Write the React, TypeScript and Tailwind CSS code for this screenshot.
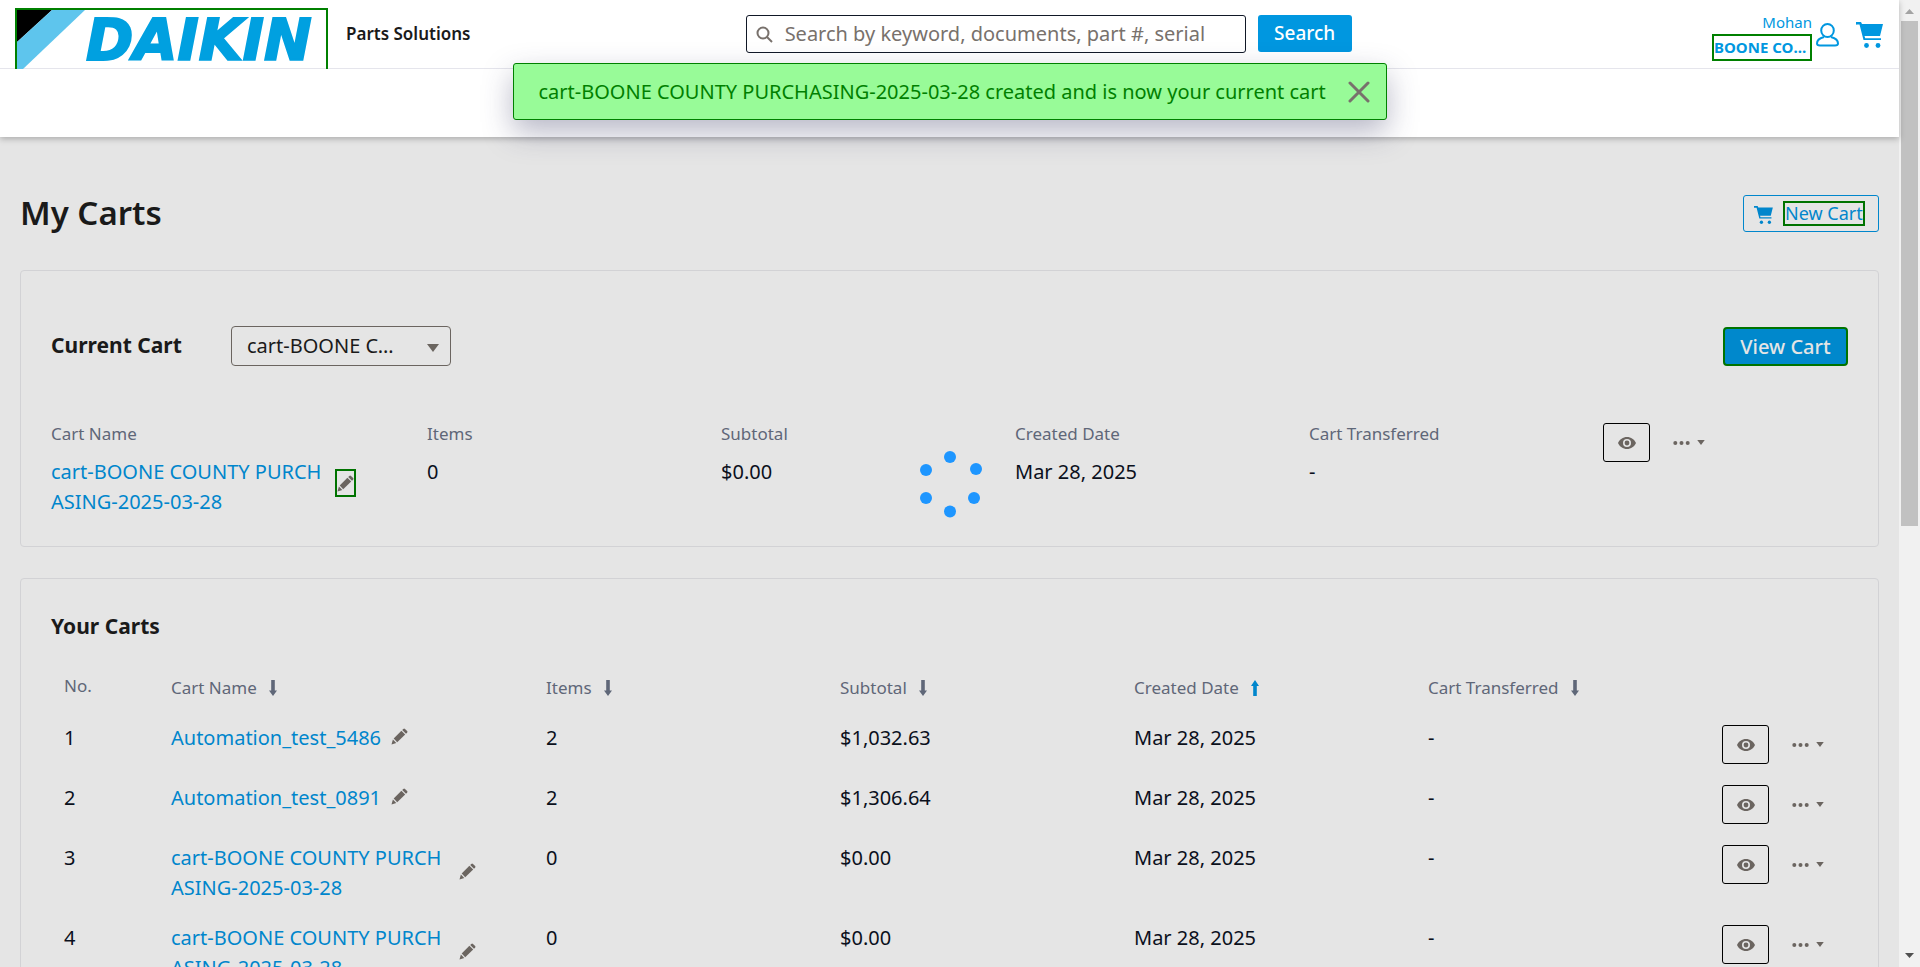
import React from "react";

type Cart = { no: number; name: string; items: number; subtotal: string; date: string };

const carts: Cart[] = [
  { no: 1, name: "Automation_test_5486", items: 2, subtotal: "$1,032.63", date: "Mar 28, 2025" },
  { no: 2, name: "Automation_test_0891", items: 2, subtotal: "$1,306.64", date: "Mar 28, 2025" },
  { no: 3, name: "cart-BOONE COUNTY PURCHASING-2025-03-28", items: 0, subtotal: "$0.00", date: "Mar 28, 2025" },
  { no: 4, name: "cart-BOONE COUNTY PURCHASING-2025-03-28", items: 0, subtotal: "$0.00", date: "Mar 28, 2025" },
];

function CartIcon({ className }: { className: string }) {
  return (
    <svg viewBox="0 0 27 26" fill="currentColor" className={className} aria-hidden="true">
      <path d="M0 0h5l1 2h21l-3 12H8.500l.7 2.200H25V18H7.500L3.500 2.500H1A1.200 1.200 0 0 1 0 0Z" />
      <circle cx="10.500" cy="23.500" r="2.400" />
      <circle cx="22" cy="23.500" r="2.400" />
    </svg>
  );
}

function PencilIcon() {
  return (
    <svg viewBox="0 0 17 17" fill="#6b6560" className="size-[17px]" aria-hidden="true">
      <path d="M12.300.9a1.200 1.200 0 0 1 1.700 0l2.100 2.100a1.200 1.200 0 0 1 0 1.700L15 5.800 11.200 2Z" />
      <path d="M10.400 2.800 14.200 6.600 6.200 14.300 2.700 10.600Z" />
      <path d="M1.900 11.500 5.300 15 .5 16.500Z" />
    </svg>
  );
}

function EyeIcon() {
  return (
    <svg viewBox="0 0 18 12" fill="#6b6560" className="h-3 w-[18px]" aria-hidden="true">
      <path
        fillRule="evenodd"
        d="M9 0c4 0 7.400 2.500 9 6-1.600 3.500-5 6-9 6S1.600 9.500 0 6c1.600-3.500 5-6 9-6Zm0 2a4 4 0 1 0 0 8 4 4 0 0 0 0-8Zm0 1.600a2.400 2.400 0 1 1 0 4.800 2.400 2.400 0 0 1 0-4.800Z"
      />
    </svg>
  );
}

function SortIcon({ up = false }: { up?: boolean }) {
  return (
    <svg viewBox="0 0 8 16" fill="currentColor" className="h-4 w-2" aria-hidden="true">
      {up ? <path d="M4 0 8 6H5.800v10H2.200V6H0Z" /> : <path d="M4 16 0 10.500h2.200V0h3.600v10.500H8Z" />}
    </svg>
  );
}

function Caret({ className }: { className: string }) {
  return (
    <svg viewBox="0 0 12 8" fill="#6b6560" className={className} aria-hidden="true">
      <path d="M0 0h12L6 8Z" />
    </svg>
  );
}

function Actions() {
  return (
    <div className="flex items-center gap-[23px]">
      <button aria-label="View" className="flex h-[39px] w-[47px] items-center justify-center rounded-[3px] border border-black">
        <EyeIcon />
      </button>
      <button aria-label="More actions" className="flex items-center gap-[7px]">
        <svg viewBox="0 0 17 4" fill="#6b6560" className="h-1 w-[17px]" aria-hidden="true">
          <circle cx="2.300" cy="2" r="2" />
          <circle cx="8.500" cy="2" r="2" />
          <circle cx="14.700" cy="2" r="2" />
        </svg>
        <Caret className="h-[5px] w-2" />
      </button>
    </div>
  );
}

function CartName({ name, marked = false }: { name: string; marked?: boolean }) {
  return (
    <div className="flex items-center gap-[10px]">
      <a href="#cart" className={marked ? "max-w-[274px] break-all text-[#0086cc]" : "max-w-[278px] break-all text-[#0086cc]"}>
        {name}
      </a>
      <button
        aria-label="Rename cart"
        className={marked ? "mb-2 flex h-7 w-[21px] items-center justify-center border-2 border-[#007300]" : "mb-1 flex"}
      >
        <PencilIcon />
      </button>
    </div>
  );
}

function Logo() {
  return (
    <a
      href="#home"
      aria-label="Daikin home"
      className="mt-2 block h-[61px] w-[313px] shrink-0 border-2 border-b-0 border-[#008000]"
    >
      <svg viewBox="0 0 309 59" className="block h-[59px] w-[309px] overflow-visible">
        <path d="M0 0h35L0 32Z" fill="#000" />
        <path d="M35 0h33L6 59H0V32Z" fill="#5ec5ed" />
        <text
          x="69"
          y="50"
          fill="#00a0e0"
          stroke="#00a0e0"
          strokeWidth="2"
          fontFamily="'DejaVu Sans', sans-serif"
          fontWeight="700"
          fontStyle="italic"
          fontSize="57"
        >
          DAIKIN
        </text>
      </svg>
    </a>
  );
}

function Header() {
  return (
    <header className="relative z-10 shadow-[0_2px_6px_rgba(0,0,0,0.25)]">
      <div className="grid h-[69px] grid-cols-[11fr_auto_8fr] items-start border-b border-[#e5e5ec] bg-white pr-4 pl-[15px]">
        <div className="flex gap-[18px]">
          <Logo />
          <span className="mt-5 text-[17px] leading-7 font-semibold text-[#1a1a1a]">Parts Solutions</span>
        </div>
        <form className="mt-[15px] flex gap-3">
          <label className="flex h-[38px] w-[500px] items-center gap-3 rounded-[3px] border border-[#111827] pr-[38px] pl-[9px]">
            <svg viewBox="0 0 17 17" fill="none" stroke="#78716c" strokeWidth="2" className="size-[17px] shrink-0" aria-hidden="true">
              <circle cx="7" cy="7" r="5.500" />
              <path d="m11 11 5 5" />
            </svg>
            <span className="sr-only">Search</span>
            <input
              type="text"
              placeholder="Search by keyword, documents, part #, serial #"
              className="w-full min-w-0 bg-transparent text-[20px] placeholder:text-[#78716c] focus:outline-none"
            />
          </label>
          <button type="button" className="h-[37px] w-[94px] rounded-[3px] bg-[#0097e0] text-[19px] font-medium text-white">
            Search
          </button>
        </form>
        <div className="flex justify-end text-[#0097e0]">
          <div className="mt-[11px] flex flex-col items-end">
            <span className="text-[15px] leading-[23px]">Mohan</span>
            <span className="h-[27px] w-[100px] truncate border-2 border-[#008000] text-[15px] leading-[23px] font-bold">
              BOONE COUNTY PURCHASING
            </span>
          </div>
          <a href="#account" aria-label="Account" className="mt-[23px] ml-1">
            <svg viewBox="0 0 23 24" fill="none" stroke="currentColor" strokeWidth="2" className="h-6 w-[23px]">
              <ellipse cx="11.500" cy="7.500" rx="6.300" ry="6.500" />
              <path d="M8 14C4 15 1 17.500 1 20.500c0 1.700 1 2 3 2h15c2 0 3-.3 3-2 0-3-3-5.500-7-6.500" />
            </svg>
          </a>
          <a href="#cart" aria-label="Cart" className="mt-[22px] ml-[17px]">
            <CartIcon className="h-[26px] w-[27px]" />
          </a>
        </div>
      </div>
      <div className="h-[68px] bg-white" />
    </header>
  );
}

function Toast() {
  return (
    <div
      role="status"
      className="absolute top-[63px] left-1/2 z-20 flex h-[57px] w-[874px] -translate-x-1/2 items-center justify-between rounded-[3px] border border-[#008000] bg-[#98fb98] pr-4 pl-[25px] text-[20px] text-[#008000] shadow-[0_12px_30px_rgba(50,50,93,0.35)]"
    >
      <span>cart-BOONE COUNTY PURCHASING-2025-03-28 created and is now your current cart</span>
      <button aria-label="Dismiss">
        <svg viewBox="0 0 22 22" stroke="#78716c" strokeWidth="3" strokeLinecap="round" className="size-[22px]">
          <path d="m2 2 18 18M20 2 2 20" />
        </svg>
      </button>
    </div>
  );
}

function Spinner() {
  return (
    <svg viewBox="0 0 64 68" fill="#1e96ff" className="absolute top-[450px] left-1/2 h-[68px] w-16 -translate-x-1/2">
      <circle cx="32" cy="7" r="6" />
      <circle cx="58" cy="19" r="6" />
      <circle cx="56" cy="48" r="6" />
      <circle cx="32" cy="61.500" r="6" />
      <circle cx="8" cy="48" r="6" />
      <circle cx="8" cy="20" r="6" />
    </svg>
  );
}

function Field({ label, value }: { label: string; value: React.ReactNode }) {
  return (
    <div>
      <dt className="mb-[9px] text-[17px] leading-7 text-[#5f6778]">{label}</dt>
      <dd className="leading-[30px]">{value}</dd>
    </div>
  );
}

function CurrentCart() {
  return (
    <section className="rounded-[4px] border border-[#d2d2d5] px-[30px] pt-[54px] pb-[29px]">
      <div className="flex items-center">
        <h2 className="w-[180px] text-[21px] font-bold text-[#1a1a1a]">Current Cart</h2>
        <div className="relative">
          <select
            aria-label="Current cart"
            className="h-10 w-[220px] appearance-none truncate rounded-[4px] border border-[#6b6560] pr-[50px] pl-[15px] text-[20px] text-[#1a1a1a]"
          >
            <option>cart-BOONE COUNTY PURCHASING-2025-03-28</option>
          </select>
          <Caret className="pointer-events-none absolute top-[18px] right-3 h-2 w-3" />
        </div>
        <button className="mt-[2px] ml-auto h-[39px] w-[125px] rounded-[4px] border-2 border-[#007300] bg-[#0088cc] text-[20px] leading-[30px] font-medium text-[#e5e5e5]">
          View Cart
        </button>
      </div>
      <dl className="mt-[54px] grid grid-cols-[376px_repeat(4,minmax(0,1fr))_245px]">
        <Field label="Cart Name" value={<CartName name="cart-BOONE COUNTY PURCHASING-2025-03-28" marked />} />
        <Field label="Items" value="0" />
        <Field label="Subtotal" value="$0.00" />
        <Field label="Created Date" value="Mar 28, 2025" />
        <Field label="Cart Transferred" value="-" />
        <div className="pt-[3px]">
          <Actions />
        </div>
      </dl>
    </section>
  );
}

function HeadCell({ label, up = false }: { label: string; up?: boolean }) {
  return (
    <th scope="col" className="p-0 text-left align-top font-normal">
      <button className="mt-[2px] flex items-center gap-3">
        {label}
        <span className={up ? "text-[#0086cc]" : ""}>
          <SortIcon up={up} />
        </span>
      </button>
    </th>
  );
}

function YourCarts() {
  return (
    <section className="mt-[31px] rounded-[4px] border border-[#d2d2d5] px-[30px] pt-[31px] pb-8">
      <h2 className="text-[21px] leading-8 font-bold text-[#1a1a1a]">Your Carts</h2>
      <table className="mt-[30px] w-full table-fixed border-collapse">
        <colgroup>
          <col className="w-[120px]" />
          <col className="w-[375px]" />
          <col />
          <col />
          <col />
          <col />
          <col className="w-[126px]" />
        </colgroup>
        <thead>
          <tr className="h-[41px] text-[17px] leading-7 text-[#5f6778]">
            <th scope="col" className="p-0 pl-[13px] text-left align-top font-normal">
              No.
            </th>
            <HeadCell label="Cart Name" />
            <HeadCell label="Items" />
            <HeadCell label="Subtotal" />
            <HeadCell label="Created Date" up />
            <HeadCell label="Cart Transferred" />
            <th />
          </tr>
        </thead>
        <tbody>
          {carts.map((cart) => (
            <tr key={cart.no} className="h-[60px] align-top leading-[30px]">
              <td className="py-[10px] pl-[13px]">{cart.no}</td>
              <td className="py-[10px]">
                <CartName name={cart.name} />
              </td>
              <td className="py-[10px]">{cart.items}</td>
              <td className="py-[10px]">{cart.subtotal}</td>
              <td className="py-[10px]">{cart.date}</td>
              <td className="py-[10px]">-</td>
              <td className="pt-3">
                <Actions />
              </td>
            </tr>
          ))}
        </tbody>
      </table>
    </section>
  );
}

function Scrollbar() {
  return (
    <div aria-hidden="true" className="flex w-[21px] shrink-0 flex-col items-center bg-[#f1f1f1]">
      <svg viewBox="0 0 21 21" fill="#a3a3a3" className="size-[21px] shrink-0">
        <path d="M6 14h9l-4.500-5Z" />
      </svg>
      <div className="w-full flex-1 px-[2px]">
        <div className="h-6/11 bg-[#c1c1c1]" />
      </div>
      <svg viewBox="0 0 21 21" fill="#505050" className="size-[21px] shrink-0">
        <path d="M6 7h9l-4.500 5Z" />
      </svg>
    </div>
  );
}

export default function App() {
  return (
    <div className="flex h-screen overflow-hidden bg-[#e5e5e5] font-['Noto_Sans',sans-serif] text-[20px] text-[#0b101c]">
      <div className="relative min-w-0 flex-1">
        <Header />
        <Toast />
        <main className="px-5 pt-[51px]">
          <div className="mb-8 flex items-center justify-between">
            <h1 className="text-[33px] leading-[50px] font-semibold text-[#1a1a1a]">My Carts</h1>
            <button className="flex h-[37px] w-[136px] items-center gap-[10px] rounded-[3px] border border-[#0086cc] pl-[10px] text-[#0086cc]">
              <CartIcon className="mt-1 h-[18px] w-[19px]" />
              <span className="border-2 border-[#007300] text-[18px] leading-[21px]">New Cart</span>
            </button>
          </div>
          <CurrentCart />
          <YourCarts />
        </main>
        <Spinner />
      </div>
      <Scrollbar />
    </div>
  );
}
